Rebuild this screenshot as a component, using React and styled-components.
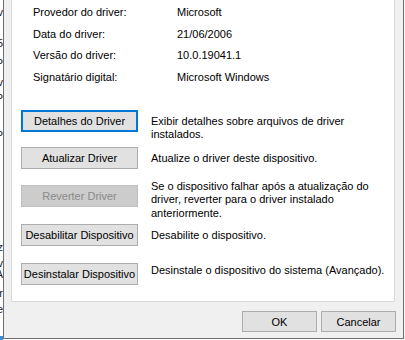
import React from 'react';
import styled, { createGlobalStyle } from 'styled-components';

const GlobalStyle = createGlobalStyle`
  html, body {
    margin: 0;
    padding: 0;
    background: #ffffff;
  }
  body {
    font-family: 'Liberation Sans', Arial, sans-serif;
    font-size: 11px;
    color: #000000;
  }
`;

const Screen = styled.div`
  width: 405px;
  height: 340px;
  display: flex;
  overflow: hidden;
  background: #ffffff;
`;

const BehindWindow = styled.div`
  width: 3px;
  flex: none;
  overflow: hidden;
  padding-top: 7px;
  display: flex;
  flex-direction: column;
`;

const BehindLine = styled.div`
  display: flex;
  justify-content: flex-end;
  align-items: flex-start;
  white-space: nowrap;
  height: ${({ $h }) => $h}px;
  line-height: 10px;
  color: #222;
`;

const TaskbarBit = styled.div`
  margin-top: auto;
  height: 4px;
  background: #3c8fd6;
`;

const Dialog = styled.div`
  width: 384px;
  height: 338px;
  flex: none;
  display: flex;
  flex-direction: column;
  background: #f0f0f0;
  border-left: 1px solid #6f6f6f;
  border-right: 1px solid #6f6f6f;
  border-bottom: 1px solid #6f6f6f;
  padding: 0 8px 0 7px;
  box-sizing: content-box;
`;

const Panel = styled.div`
  height: 300px;
  flex: none;
  background: #ffffff;
  border: 1px solid #d9d9d9;
  border-top: none;
  padding: 1px 0 0 9px;
`;

const InfoList = styled.div`
  display: grid;
  grid-template-columns: 144px 1fr;
  grid-auto-rows: 21.7px;
  align-items: center;
  padding-left: 12px;
  margin-bottom: 22px;
`;

const InfoCell = styled.div`
  white-space: nowrap;
`;

const ActionRow = styled.div`
  display: flex;
  align-items: flex-start;
  height: ${({ $h }) => $h}px;
`;

const ActionButton = styled.button`
  width: 117px;
  height: 22px;
  flex: none;
  margin: 0;
  padding: 0;
  font-family: inherit;
  font-size: 11px;
  line-height: 18px;
  color: ${({ disabled }) => (disabled ? '#8a8a8a' : '#000000')};
  background: ${({ disabled }) => (disabled ? '#cccccc' : '#e1e1e1')};
  border: ${({ $focused, disabled }) =>
    $focused ? '2px solid #0078d7' : disabled ? '1px solid #bfbfbf' : '1px solid #adadad'};
  box-sizing: border-box;
`;

const Description = styled.div`
  margin-left: 13px;
  margin-top: ${({ $offset }) => $offset}px;
  line-height: 13.5px;
  width: 240px;
`;

const Footer = styled.div`
  display: flex;
  justify-content: flex-end;
  gap: 4px;
  padding: 9px 0 0 0;
  margin-right: -1px;
`;

const DialogButton = styled.button`
  width: 75px;
  height: 21px;
  margin: 0;
  padding: 0;
  font-family: inherit;
  font-size: 11px;
  color: #000000;
  background: #e1e1e1;
  border: 1px solid #adadad;
  box-sizing: border-box;
`;

const RightEdge = styled.div`
  width: 1px;
  flex: none;
  background: #f7f7f7;
`;

const behind = [
  { t: 'v', h: 31 },
  { t: '5', h: 20 },
  { t: 'P', h: 19 },
  { t: 'v', h: 16 },
  { t: 'P', h: 37 },
  { t: 'P', h: 112 },
  { t: 'z', h: 16 },
  { t: 'v', h: 11 },
  { t: 'A', h: 19 },
  { t: 'rr', h: 16 },
  { t: 'e', h: 14 },
];

const info = [
  ['Provedor do driver:', 'Microsoft'],
  ['Data do driver:', '21/06/2006'],
  ['Versão do driver:', '10.0.19041.1'],
  ['Signatário digital:', 'Microsoft Windows'],
];

const actions = [
  {
    label: 'Detalhes do Driver',
    text: 'Exibir detalhes sobre arquivos de driver instalados.',
    h: 37,
    offset: 5,
    focused: true,
  },
  {
    label: 'Atualizar Driver',
    text: 'Atualize o driver deste dispositivo.',
    h: 38,
    offset: 5,
  },
  {
    label: 'Reverter Driver',
    text: 'Se o dispositivo falhar após a atualização do driver, reverter para o driver instalado anteriormente.',
    h: 39,
    offset: -5,
    disabled: true,
  },
  {
    label: 'Desabilitar Dispositivo',
    text: 'Desabilite o dispositivo.',
    h: 39,
    offset: 5,
  },
  {
    label: 'Desinstalar Dispositivo',
    text: 'Desinstale o dispositivo do sistema (Avançado).',
    h: 30,
    offset: 1,
  },
];

export default function App() {
  return (
    <>
      <GlobalStyle />
      <Screen>
        <BehindWindow>
          {behind.map((b, i) => (
            <BehindLine key={i} $h={b.h}>
              Propriedades {b.t}
            </BehindLine>
          ))}
          <TaskbarBit />
        </BehindWindow>
        <Dialog>
          <Panel>
            <InfoList>
              {info.map(([label, value]) => (
                <React.Fragment key={label}>
                  <InfoCell>{label}</InfoCell>
                  <InfoCell>{value}</InfoCell>
                </React.Fragment>
              ))}
            </InfoList>
            {actions.map((a) => (
              <ActionRow key={a.label} $h={a.h}>
                <ActionButton $focused={a.focused} disabled={a.disabled}>
                  {a.label}
                </ActionButton>
                <Description $offset={a.offset}>{a.text}</Description>
              </ActionRow>
            ))}
          </Panel>
          <Footer>
            <DialogButton>OK</DialogButton>
            <DialogButton>Cancelar</DialogButton>
          </Footer>
        </Dialog>
        <RightEdge />
      </Screen>
    </>
  );
}
